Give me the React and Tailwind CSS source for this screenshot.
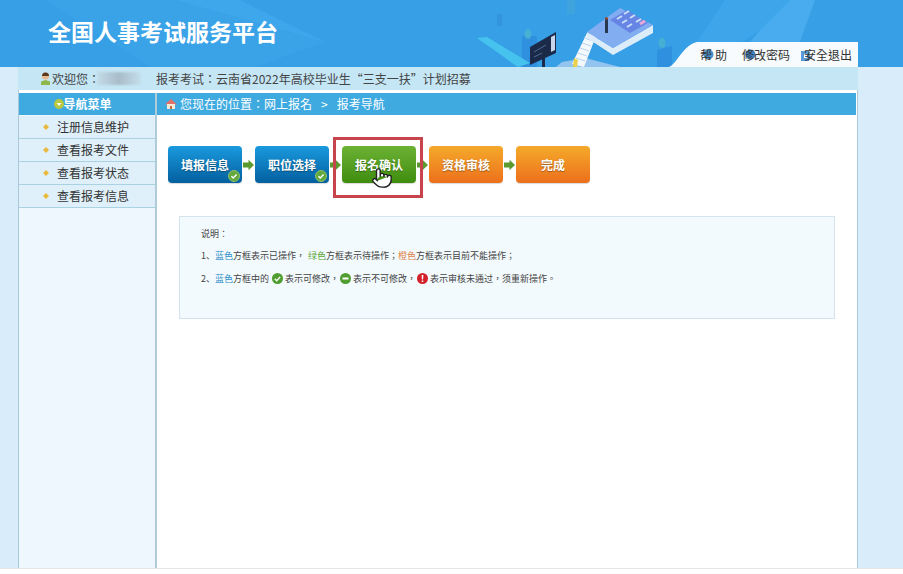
import React from "react";
import { Pointer } from "lucide-react";

const MENU = ["注册信息维护", "查看报考文件", "查看报考状态", "查看报考信息"];

function Illustration() {
  return (
    <svg className="absolute inset-0 pointer-events-none" width="903" height="67" viewBox="0 0 903 67">
      {/* light bands of the banner */}
      <polygon points="45,0 175,0 325,42 255,67 150,67" fill="#3aa2e7" />
      <polygon points="175,0 240,0 325,42" fill="#3ea6ea" />
      <polygon points="680,67 725,0 790,0 760,30 705,67" fill="#3ea5ea" />
      <polygon points="760,30 790,0 815,0 800,42 750,42" fill="#49acef" />
      {/* columns */}
      <rect x="497" y="14" width="5" height="12" fill="#3395de" />
      <rect x="567" y="0" width="8" height="14" fill="#3fa3dc" />
      <rect x="522" y="36" width="15" height="31" fill="#2f90df" />
      <ellipse cx="528" cy="34" rx="3.500" ry="5" fill="#47aed4" />
      <polygon points="657,50 672,46 672,67 657,67" fill="#2f90df" />
      <ellipse cx="662" cy="43" rx="3.500" ry="5" fill="#47aed4" />
      {/* strip */}
      <polygon points="477,38 487,37 530,63 518,67" fill="#45c3ee" />
      {/* board */}
      <polygon points="530,47 556,32 556,53 530,65" fill="#1c2a4a" />
      <polygon points="551,37 555,35 555,50 551,52" fill="#c9d6ea" />
      <path d="M534 52l12-7M534 57l8-4" stroke="#4d6a96" strokeWidth="1" />
      <rect x="542" y="58" width="3" height="9" fill="#1c2a4a" />
      {/* base */}
      <polygon points="556,67 562,62 585,58 620,67" fill="#93c3ef" />
      {/* stairs */}
      <polygon points="587,33 596,36 584,67 572,64" fill="#f3f8fd" />
      <path d="M584 38l9 3M582 43l9 3M580 48l9 3M578 53l9 3M576 58l9 3" stroke="#b8d4ee" strokeWidth="1" />
      <polygon points="574,58 578,60 577,67 573,67" fill="#e9d24a" />
      {/* platform */}
      <polygon points="587,32 587,38 613,55 653,33 653,25 613,48" fill="#dcecf9" />
      <polygon points="587,32 620,8 653,25 613,48" fill="#82aef1" />
      <polygon points="610,20 627,10 648,23 630,33" fill="#6685e4" />
      <path d="M617 19l5-3M622 23l5-3M627 27l5-3M624 14l5-3M630 18l5-3M636 22l5-3" stroke="#c9e0f7" strokeWidth="2" />
      <path d="M640 24l5-3" stroke="#e6a8d8" strokeWidth="3" />
      <rect x="605" y="19" width="3" height="14" fill="#26384f" />
      <circle cx="606.5" cy="18.5" r="1.6" fill="#8a4a3a" />
    </svg>
  );
}

function TabIcon({ color }) {
  return (
    <svg className="absolute left-[3px] top-[3px]" width="11" height="11" viewBox="0 0 11 11">
      <circle cx="5.5" cy="5.5" r="5" fill={color} />
    </svg>
  );
}

function TopTabs() {
  return (
    <div className="relative z-10 ml-auto mr-[45px] flex h-[25px] self-end">
      <svg width="28" height="25" viewBox="0 0 28 25" className="block">
        <path d="M0 25 C8 22 14 3 28 0 L28 25 Z" fill="#f7fbfe" />
      </svg>
      <div className="flex w-[161px] items-center bg-[#f7fbfe] pl-[3px] text-[12px] text-[#333]">
        <span className="relative mr-[15px] flex h-[17px] w-[27px] items-center justify-between">
          <TabIcon color="#4a90c8" />
          <span className="relative">帮</span>
          <span className="relative">助</span>
        </span>
        <span className="relative mr-[14px] flex h-[17px] items-center">
          <TabIcon color="#3f7fc0" />
          <span className="relative">修改密码</span>
        </span>
        <span className="relative flex h-[17px] items-center">
          <svg className="absolute -left-[4px] top-[4px]" width="12" height="12" viewBox="0 0 12 12">
            <path d="M1 1h8v3H4v4h5v3H1z" fill="#5a9ad6" />
            <path d="M5 6h3V4l3 2.5L8 9V7H5z" fill="#2f77b8" />
          </svg>
          <span className="relative">安全退出</span>
        </span>
      </div>
    </div>
  );
}

function Check({ className }) {
  return (
    <svg className={className} width="12" height="12" viewBox="0 0 12 12">
      <circle cx="6" cy="6" r="5.5" fill="#62a83c" stroke="#8fc06e" strokeWidth="1" />
      <path d="M3.4 6.200l1.800 1.800 3.400-3.600" fill="none" stroke="#fff" strokeWidth="1.4" />
    </svg>
  );
}

function Arrow() {
  return (
    <svg width="13" height="12" viewBox="0 0 13 12" className="block shrink-0">
      <path d="M1 3.500h5.500V.8L12 6l-5.500 5.200V8.500H1z" fill="#5a9a2f" />
    </svg>
  );
}

function Step({ label, className, done, children }) {
  return (
    <div className={`relative flex h-[37px] w-[74px] shrink-0 items-center justify-center rounded-[4px] text-[12px] font-bold text-white shadow-[0_1px_1px_rgba(0,0,0,0.15)] [text-shadow:0_1px_1px_rgba(0,0,0,0.35)] ${className}`}>
      {label}
      {done && <Check className="absolute bottom-[1px] right-[2px]" />}
      {children}
    </div>
  );
}

function Dot({ color, minus, check, bang }) {
  return (
    <svg className="ml-[1px] mr-[2px] inline-block align-[-2px]" width="11" height="11" viewBox="0 0 11 11">
      <circle cx="5.5" cy="5.5" r="5.5" fill={color} />
      {check && <path d="M2.8 5.800l1.900 1.900 3.500-3.800" fill="none" stroke="#fff" strokeWidth="1.4" />}
      {minus && <rect x="2.5" y="4.5" width="6" height="2" fill="#fff" />}
      {bang && <path d="M4.600 2h1.800l-.3 4.500H4.900zM4.700 7.400h1.600V9H4.700z" fill="#fff" />}
    </svg>
  );
}

export default function App() {
  return (
    <div className="h-[574px] w-[903px] overflow-hidden bg-white font-['Noto_Sans_CJK_TC','Liberation_Sans',sans-serif]">
      <div className="flex h-[568px] flex-col bg-[#d9ecfa]">
        {/* Banner */}
        <header className="relative flex h-[67px] shrink-0 bg-[#379fe5]">
          <Illustration />
          <h1 className="relative ml-[48px] self-center pb-[4px] text-[23px] font-bold leading-none text-white font-['Noto_Sans_CJK_SC',sans-serif]">
            全国人事考试服务平台
          </h1>
          <TopTabs />
        </header>

        {/* User bar */}
        <div className="ml-[18px] flex h-[23px] w-[840px] shrink-0 items-center bg-[#c5e6f5] text-[12px] text-[#444]">
          <svg className="ml-[22px] shrink-0" width="11" height="13" viewBox="0 0 11 13">
            <circle cx="5.5" cy="4" r="3.5" fill="#e8b98a" />
            <path d="M2 4a3.500 3.500 0 0 1 7 0z" fill="#5a3a20" />
            <path d="M1 13V9.500L5.500 8 10 9.500V13z" fill="#8fb84a" />
          </svg>
          <span className="ml-[1px]">欢迎您：</span>
          <span className="-ml-[3px] h-[13px] w-[44px] bg-gradient-to-r from-[#c3dbe8] via-[#a9bdc8] to-[#c3dfec] blur-[1px]" />
          <span className="ml-[15px]">报考考试：云南省2022年高校毕业生“三支一扶”计划招募</span>
        </div>

        {/* Main */}
        <div className="ml-[18px] flex min-h-0 w-[840px] flex-1 border-x border-[#a9c9db] bg-white pt-[3px]">
          <aside className="flex w-[136px] shrink-0 flex-col bg-[#eef7fd]">
            <div className="flex h-[22px] shrink-0 items-center justify-center bg-[#3eaadf] pr-[8px] text-[12px] font-bold text-white">
              <svg className="-mr-[1px] shrink-0" width="10" height="10" viewBox="0 0 10 10">
                <circle cx="5" cy="5" r="5" fill="#b9c83e" />
                <path d="M2.500 4h5L5 7z" fill="#fff" />
              </svg>
              导航菜单
            </div>
            <ul className="pt-[1px]">
              {MENU.map((item) => (
                <li key={item} className="flex h-[23px] items-center border-b border-[#a9d3e3] bg-[#dff0fa] pl-[24px] text-[12px] text-[#333]">
                  <svg className="mr-[8px] shrink-0" width="6" height="6" viewBox="0 0 6 6">
                    <path d="M3 0l3 3-3 3-3-3z" fill="#e8b93c" />
                  </svg>
                  {item}
                </li>
              ))}
            </ul>
          </aside>
          <div className="w-[2px] shrink-0 bg-[#b0cbda]" />

          <main className="flex min-w-0 flex-1 flex-col">
            <div className="mr-[1px] flex h-[22px] shrink-0 items-center bg-[#3eaadf] pl-[8px] text-[12px] text-white">
              <svg className="mr-[3px] shrink-0" width="12" height="12" viewBox="0 0 12 12">
                <path d="M6 1l6 5.500H0z" fill="#e4706a" />
                <rect x="2" y="6" width="8" height="5" fill="#f4ead8" />
                <rect x="5" y="8" width="2" height="3" fill="#c96a3a" />
              </svg>
              您现在的位置：网上报名
              <span className="mx-[9px]">&gt;</span>
              报考导航
            </div>

            {/* Steps */}
            <div className="ml-[11px] mt-[31px] flex items-center">
              <Step label="填报信息" done className="bg-gradient-to-b from-[#1a9ade] to-[#04609f]" />
              <Arrow />
              <Step label="职位选择" done className="bg-gradient-to-b from-[#1a9ade] to-[#04609f]" />
              <Arrow />
              <Step label="报名确认" className="bg-gradient-to-b from-[#6cb233] to-[#3f8d0e]">
                <span className="absolute -left-[9px] -right-[7px] -top-[9px] -bottom-[15px] border-[3px] border-[#c8444c]" />
                <Pointer className="absolute left-[29px] top-[21px]" size={22} fill="#fff" stroke="#222" strokeWidth={1.5} />
              </Step>
              <Arrow />
              <Step label="资格审核" className="bg-gradient-to-b from-[#f4a92a] to-[#ec6f1c]" />
              <Arrow />
              <Step label="完成" className="bg-gradient-to-b from-[#f4a92a] to-[#ec6f1c]" />
            </div>

            {/* Notes */}
            <div className="ml-[22px] mt-[33px] h-[103px] w-[656px] border border-[#d3e3ec] bg-[#f3fafe] pl-[21px] pt-[10px] text-[9px] leading-[13px] text-[#444]">
              <p>说明：</p>
              <p className="mt-[9px]">
                1<span className="font-['Noto_Sans_CJK_SC',sans-serif]">、</span><span className="text-[#2f8fc8]">蓝色</span>方框表示已操作，
                <span className="ml-[3px] text-[#5ea63c]">绿色</span>方框表示待操作；
                <span className="text-[#e0824a]">橙色</span>方框表示目前不能操作；
              </p>
              <p className="mt-[10px]">
                2<span className="font-['Noto_Sans_CJK_SC',sans-serif]">、</span><span className="text-[#2f8fc8]">蓝色</span>方框中的 <Dot color="#4f9e2f" check />表示可修改，
                <Dot color="#4f9e2f" minus />表示不可修改，
                <Dot color="#d3202a" bang />表示审核未通过，须重新操作。
              </p>
            </div>
          </main>
        </div>
      </div>
      <div className="h-[1px] bg-[#e5e5e5]" />
    </div>
  );
}
